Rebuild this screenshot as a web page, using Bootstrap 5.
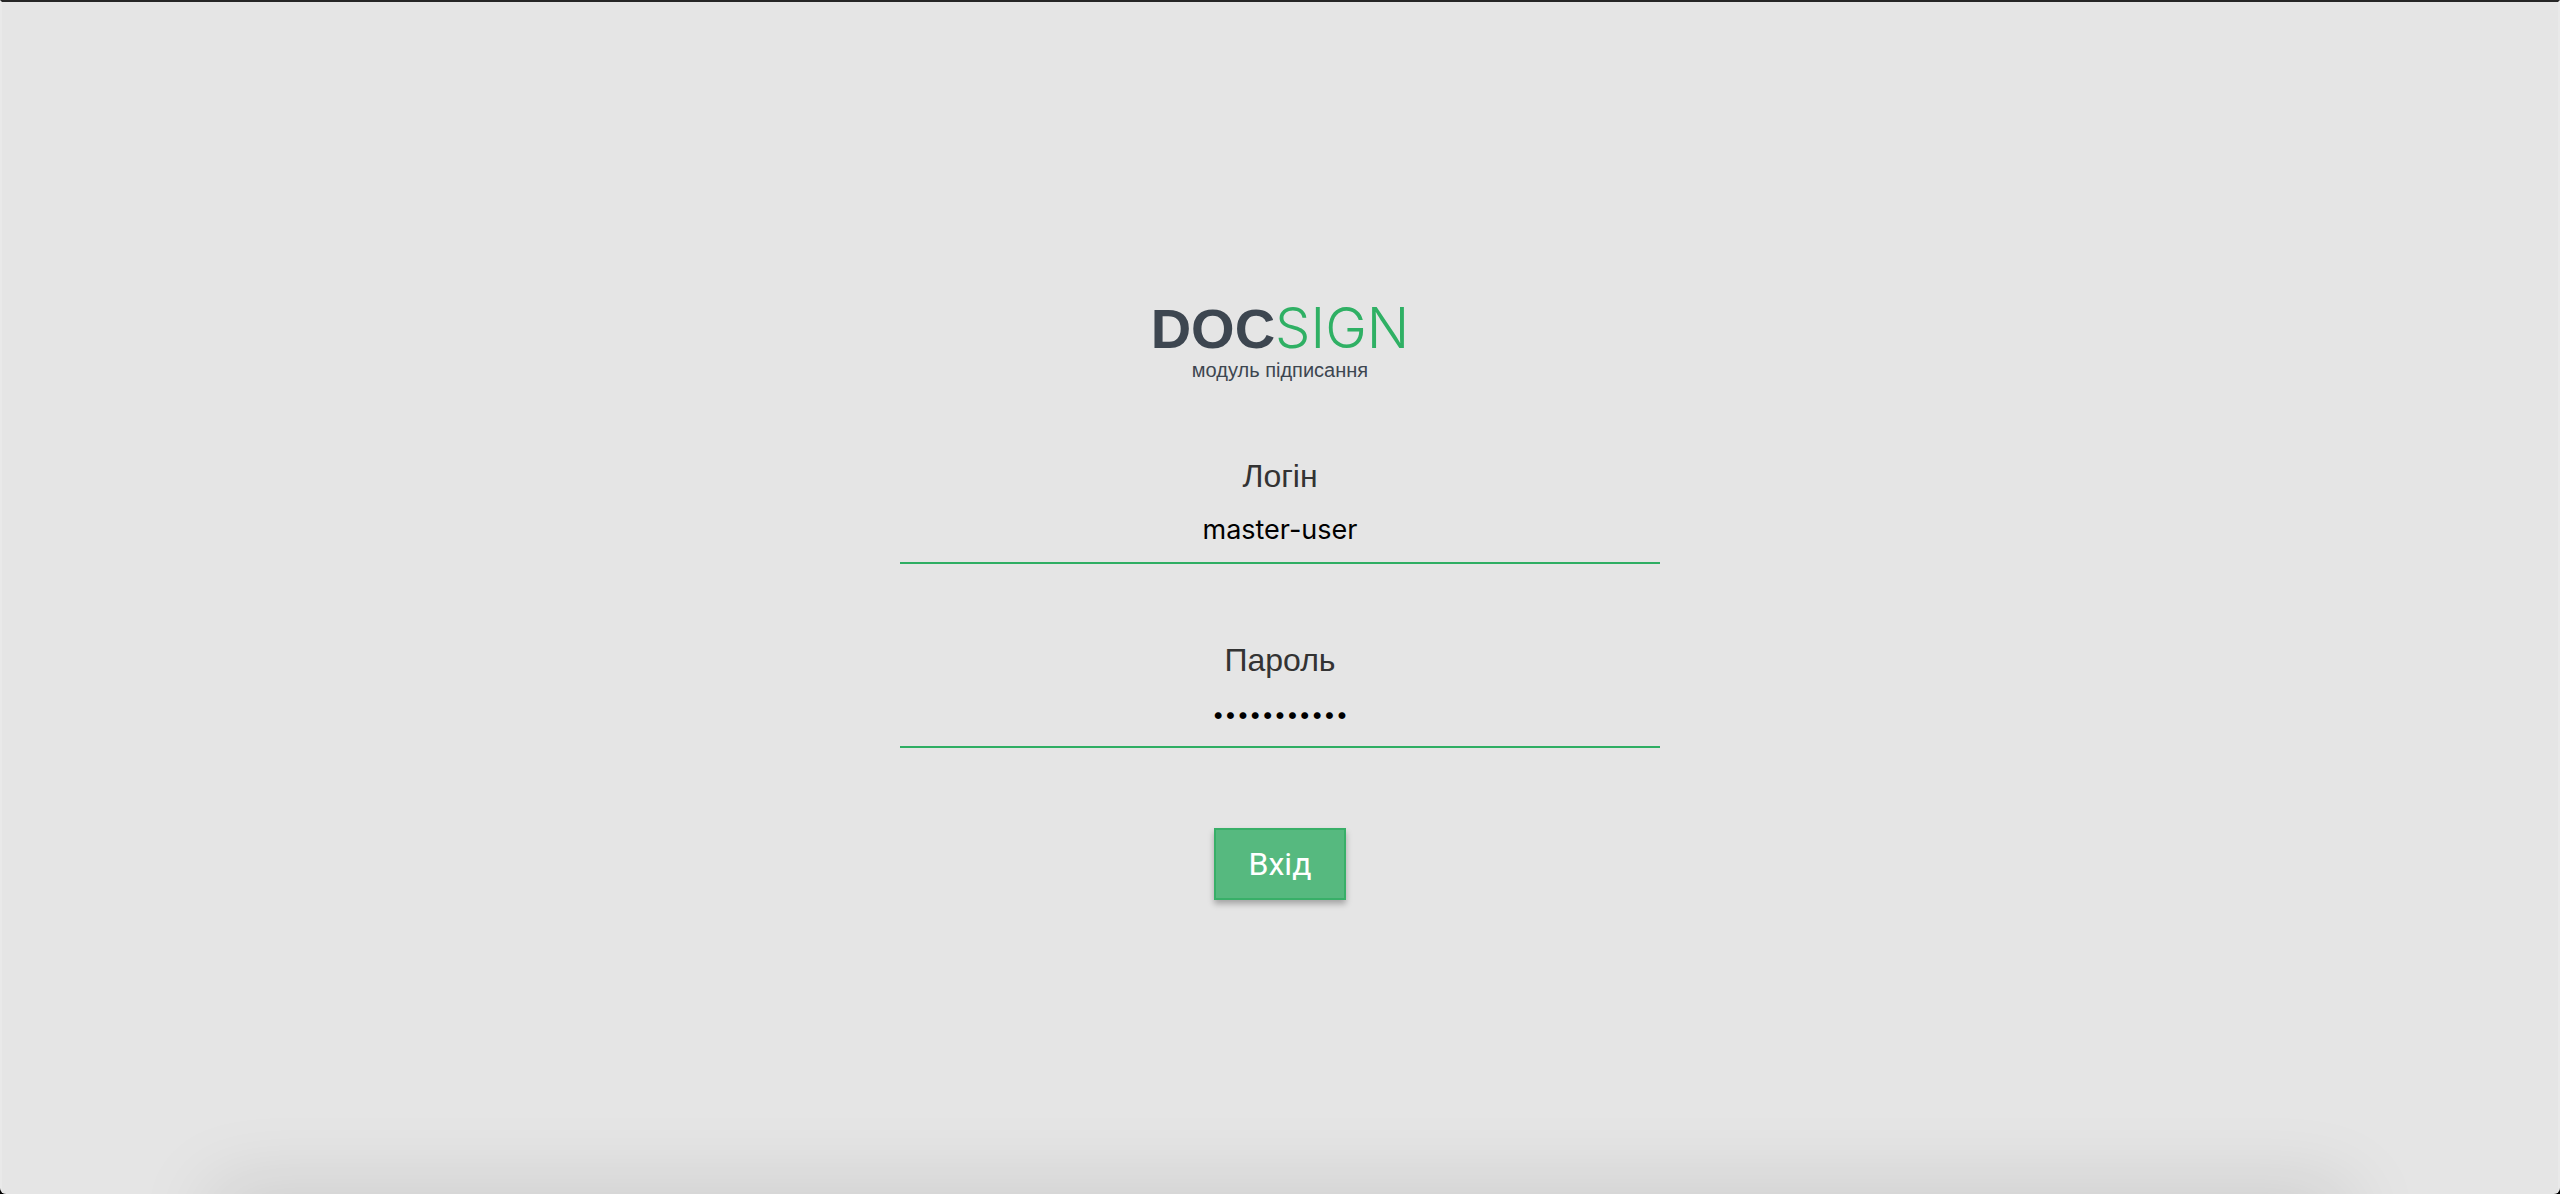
<!DOCTYPE html>
<html lang="uk">
<head>
<meta charset="utf-8">
<meta name="viewport" content="width=device-width, initial-scale=1">
<title>DOCSIGN</title>
<link rel="stylesheet" href="https://cdn.jsdelivr.net/npm/bootstrap@5.3.0/dist/css/bootstrap.min.css">
<style>
  body { background: #000; color: #333; font-family: "Liberation Sans", Arial, sans-serif; }
  .login-page { background: #e5e5e5; border: 2px solid #e9e9e9; border-top-color: #262626; border-bottom: 0; border-radius: 0 0 6px 6px; }
  .login-form { max-width: 760px; gap: 76px; }
  .brand { color: #3d4650; }
  .brand-name { font-size: 56px; line-height: 62px; }
  .brand-name span { color: #2fb064; font-family: Inter, "Liberation Sans", sans-serif; font-weight: 300; }
  .brand-note { font-size: 20px; line-height: 20px; }
  .field-label { font-size: 32px; line-height: 40px; margin-bottom: 4px; }
  .field-input, .field-input:focus { background: transparent; border: 0; border-bottom: 2px solid #2fae63; border-radius: 0; box-shadow: none; color: #000; font-family: Inter, sans-serif; font-size: 27px; line-height: 40px; padding: 10px 0 12px; height: 64px; }
  .field-input[type="password"] { font-size: 22px; }
  .login-btn, .login-btn:hover { background: #56b97f; border: 2px solid #38af68; border-radius: 0; color: #fff; font-family: Roboto, sans-serif; font-size: 32px; line-height: 44px; min-width: 132px; margin-top: 4px; padding: 12px 32px; box-shadow: 0 4px 6px rgba(0, 0, 0, .28); }
  .bottom-shade { left: 220px; right: 220px; height: 40px; bottom: -46px; box-shadow: 0 0 80px 10px rgba(0, 0, 0, .13); }
</style>
</head>
<body>
<main class="login-page position-relative overflow-hidden min-vh-100 d-flex align-items-center justify-content-center">
  <form class="login-form w-100 d-flex flex-column align-items-center text-center">
    <h1 class="brand mb-0 d-flex flex-column">
      <span class="brand-name fw-bold d-block">DOC<span>SIGN</span></span>
      <small class="brand-note">модуль підписання</small>
    </h1>
    <div class="w-100 d-flex flex-column">
      <label class="field-label" for="login">Логін</label>
      <input class="field-input form-control text-center" id="login" type="text" value="master-user" autocomplete="username">
    </div>
    <div class="w-100 d-flex flex-column">
      <label class="field-label" for="password">Пароль</label>
      <input class="field-input form-control text-center" id="password" type="password" value="master-user" autocomplete="current-password">
    </div>
    <button class="login-btn btn" type="submit">Вхід</button>
  </form>
  <div class="bottom-shade position-absolute"></div>
</main>
<script src="https://cdn.jsdelivr.net/npm/bootstrap@5.3.0/dist/js/bootstrap.bundle.min.js"></script>
</body>
</html>
